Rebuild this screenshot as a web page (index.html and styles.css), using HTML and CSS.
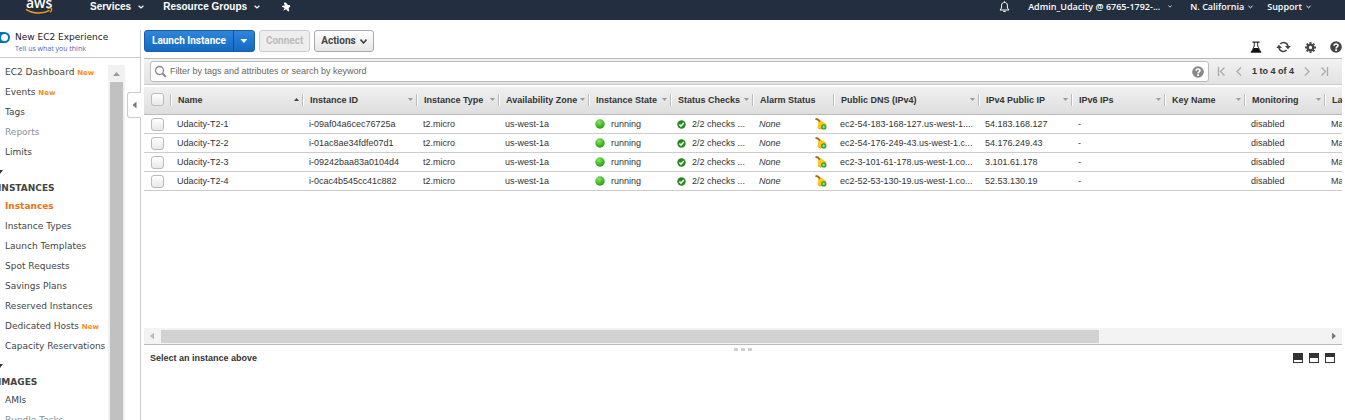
FILE: index.html
```html
<!DOCTYPE html>
<html lang="en">
<head>
<meta charset="utf-8">
<title>Instances | EC2 Management Console</title>
<link rel="stylesheet" href="styles.css">
</head>
<body>
<svg class="defs" aria-hidden="true">
  <defs>
    <radialGradient id="green" cx="0.4" cy="0.3" r="0.7"><stop offset="0" stop-color="#8be36a"/><stop offset="0.6" stop-color="#46bd2a"/><stop offset="1" stop-color="#2b9a17"/></radialGradient>
    <symbol id="dot" viewBox="0 0 10 10"><circle cx="5" cy="5" r="4.7" fill="url(#green)"/></symbol>
    <symbol id="ok" viewBox="0 0 9 9"><circle cx="4.5" cy="4.5" r="4.2" fill="#26891f"/><path d="M2.4 4.5l1.6 1.6 2.8-3" fill="none" stroke="#fff" stroke-width="1.5"/></symbol>
    <symbol id="alarm" viewBox="0 0 12 12"><path d="M3.200 3.400L5.600 2.200 11.600 6 5.600 11 2.600 9.600z" fill="#fbc91d"/><path d="M2.800 9.800L5.700 11.200 8 9.400" fill="none" stroke="#d9981c" stroke-width="0.900"/><path d="M0.500 0.800L3 1.600 5 3.600" fill="none" stroke="#a06a22" stroke-width="1.900"/><circle cx="8.800" cy="8.900" r="2.700" fill="#2f9e22"/><path d="M8.800 7.400v3M7.300 8.900h3" stroke="#b9eba9" stroke-width="0.900"/></symbol>
    <symbol id="help" viewBox="0 0 12 12"><circle cx="6" cy="6" r="5.8" fill="currentColor"/><path d="M4.1 4.7C4.1 2.4 8 2.4 8 4.6 8 6 6.1 5.9 6.1 7.4" fill="none" stroke="#fff" stroke-width="1.6"/><path d="M5.2 8.3h1.8v1.6H5.2z" fill="#fff"/></symbol>
    <symbol id="chev" viewBox="0 0 6 4"><path d="M0.6 0.7L3 3 5.4 0.7" fill="none" stroke="currentColor" stroke-width="1.2"/></symbol>
  </defs>
</svg>

<header class="topbar">
  <a class="logo" href="#" aria-label="AWS home">
    <svg width="28" height="20" viewBox="0 0 28 20"><text class="logo-text" x="1" y="8">aws</text><path d="M1 9.4C8 14 18 14 24.500 10.300" fill="none" stroke="#f79a1f" stroke-width="1.5"/><path d="M22.500 8.700c2-.9 4-.8 4.200-.2.200 1-.5 2.700-1.600 4" fill="none" stroke="#f79a1f" stroke-width="1.100"/></svg>
  </a>
  <button class="menu menu-services">Services <svg width="6" height="4"><use href="#chev"/></svg></button>
  <button class="menu menu-groups">Resource Groups <svg width="6" height="4"><use href="#chev"/></svg></button>
  <button class="menu" aria-label="Pin"><svg width="10" height="10" viewBox="0 0 10 10"><path d="M3.700.3L5.200 1 6.900 3l2 .3.5 1.200L7.700 6l.4 3-1 .4L5 7.300 2.300 8.800 3.600 6.100 1 4.700l.3-1 2.500-.2L2.900 1.200z" fill="#fff"/></svg></button>
  <div class="account">
    <button class="menu menu-bell" aria-label="Notifications"><svg width="11" height="12" viewBox="0 0 11 12"><path d="M1 9h9L8.400 7V4.200C8.400.5 2.600.5 2.600 4.200V7zM4.300 10.500h2.400M5.500.3v1.200" fill="none" stroke="#fff" stroke-width="1"/></svg></button>
    <button class="menu menu-user">Admin_Udacity @ 6765-1792-... <svg width="4" height="3"><use href="#chev"/></svg></button>
    <button class="menu menu-region">N. California <svg width="5" height="4"><use href="#chev"/></svg></button>
    <button class="menu">Support <svg width="5" height="4"><use href="#chev"/></svg></button>
  </div>
</header>

<div class="page">
  <aside class="sidebar">
    <div class="experience">
      <label class="switch"><input type="checkbox" checked><span class="track"></span><span>New EC2 Experience</span></label>
      <a href="#">Tell us what you think</a>
    </div>
    <div class="side-body">
      <nav class="side-nav">
        <ul>
          <li><a href="#">EC2 Dashboard</a> <b>New</b></li>
          <li><a href="#">Events</a> <b>New</b></li>
          <li><a href="#">Tags</a></li>
          <li class="dim"><a href="#">Reports</a></li>
          <li><a href="#">Limits</a></li>
        </ul>
        <div class="fold"></div>
        <h2>INSTANCES</h2>
        <ul>
          <li class="current"><a href="#">Instances</a></li>
          <li><a href="#">Instance Types</a></li>
          <li><a href="#">Launch Templates</a></li>
          <li><a href="#">Spot Requests</a></li>
          <li><a href="#">Savings Plans</a></li>
          <li><a href="#">Reserved Instances</a></li>
          <li><a href="#">Dedicated Hosts</a> <b>New</b></li>
          <li><a href="#">Capacity Reservations</a></li>
        </ul>
        <div class="fold"></div>
        <h2>IMAGES</h2>
        <ul>
          <li><a href="#">AMIs</a></li>
          <li class="dim"><a href="#">Bundle Tasks</a></li>
        </ul>
      </nav>
      <div class="vscroll"><span class="arrow-up"></span><span class="vthumb"></span></div>
    </div>
    <button class="collapse" aria-label="Collapse sidebar"><span></span></button>
  </aside>

  <main class="content">
    <div class="toolbar">
      <div class="split"><button class="launch">Launch Instance</button><button class="launch-more" aria-label="More launch options"><span></span></button></div>
      <button class="btn" disabled>Connect</button>
      <button class="btn">Actions <svg width="7" height="5" viewBox="0 0 7 5"><path d="M.5.5L3.500 4 6.500.5" fill="none" stroke="#444" stroke-width="1.600"/></svg></button>
      <div class="tools">
        <button aria-label="Experiments"><svg width="12" height="12" viewBox="0 0 12 12"><path d="M2.500.5h7v1.300H2.500zM3.800 1.500h1v3.800L1.500 10h9L7.200 5.300V1.500h1V5L11.500 11.500H.5L3.800 5z" fill="#222"/><path d="M3.500 7h5l2.500 4.500H1z" fill="#111"/></svg></button>
        <button aria-label="Refresh"><svg width="15" height="12" viewBox="0 0 15 12"><path d="M4.300 3C7 .3 11.500 1.500 12 5.500M10.700 9C8 11.700 3.500 10.500 3 6.500" fill="none" stroke="#444" stroke-width="1.700"/><path d="M9 5h5.800L12 8.300zM.2 7h5.800L3 3.700z" fill="#444"/></svg></button>
        <button aria-label="Settings"><svg width="11" height="11" viewBox="0 0 12 12"><circle cx="6" cy="6" r="3.100" fill="none" stroke="#444" stroke-width="2.600"/><path d="M6 0v2M6 10v2M0 6h2M10 6h2M1.800 1.800l1.400 1.400M8.800 8.800l1.400 1.400M1.800 10.200l1.400-1.400M8.800 3.200l1.400-1.400" stroke="#444" stroke-width="2.200"/></svg></button>
        <button aria-label="Help"><svg width="12" height="12"><use href="#help"/></svg></button>
      </div>
    </div>

    <div class="filter">
      <div class="search">
        <svg width="13" height="13" viewBox="0 0 13 13"><circle cx="5.500" cy="5.500" r="4" fill="none" stroke="#888" stroke-width="1.300"/><path d="M8.500 8.500l3.300 3.300" stroke="#888" stroke-width="2"/></svg>
        <input type="text" aria-label="Filter instances" placeholder="Filter by tags and attributes or search by keyword">
        <svg class="search-help" width="12" height="12"><use href="#help"/></svg>
      </div>
      <div class="pager">
        <button aria-label="First page"><svg width="9" height="9" viewBox="0 0 9 9"><path d="M1.500 0v9M7.500.5l-4 4 4 4"/></svg></button>
        <button aria-label="Previous page"><svg width="6" height="9" viewBox="0 0 6 9"><path d="M5 .5l-4 4 4 4"/></svg></button>
        <span>1 to 4 of 4</span>
        <button aria-label="Next page"><svg width="6" height="9" viewBox="0 0 6 9"><path d="M1 .5l4 4-4 4"/></svg></button>
        <button aria-label="Last page"><svg width="9" height="9" viewBox="0 0 9 9"><path d="M7.500 0v9M1.500.5l4 4-4 4"/></svg></button>
      </div>
    </div>

    <div class="grid">
      <table>
        <colgroup><col class="w-check"><col class="w-name"><col class="w-id"><col class="w-type"><col class="w-zone"><col class="w-state"><col class="w-checks"><col class="w-alarm"><col class="w-dns"><col class="w-ip"><col class="w-ip6"><col class="w-key"><col class="w-mon"><col></colgroup>
        <thead><tr>
          <th class="pick"><input type="checkbox" aria-label="Select all"></th>
          <th class="sorted"><div>Name</div></th><th class="sort"><div>Instance ID</div></th><th class="sort"><div>Instance Type</div></th><th class="sort"><div>Availability Zone</div></th><th class="sort"><div>Instance State</div></th><th class="sort"><div>Status Checks</div></th><th><div>Alarm Status</div></th><th class="sort"><div>Public DNS (IPv4)</div></th><th class="sort"><div>IPv4 Public IP</div></th><th class="sort"><div>IPv6 IPs</div></th><th class="sort"><div>Key Name</div></th><th class="sort"><div>Monitoring</div></th><th><div>La</div></th>
        </tr></thead>
        <tbody>
          <tr><td class="pick"><input type="checkbox" aria-label="Select Udacity-T2-1"></td><td>Udacity-T2-1</td><td>i-09af04a6cec76725a</td><td>t2.micro</td><td>us-west-1a</td><td><div class="state"><svg width="10" height="10"><use href="#dot"/></svg>running</div></td><td><div class="checks"><svg width="9" height="9"><use href="#ok"/></svg>2/2 checks ...</div></td><td><div class="alarm"><i>None</i><svg width="12" height="12"><use href="#alarm"/></svg></div></td><td>ec2-54-183-168-127.us-west-1....</td><td>54.183.168.127</td><td>-</td><td></td><td>disabled</td><td>Ma</td></tr>
          <tr><td class="pick"><input type="checkbox" aria-label="Select Udacity-T2-2"></td><td>Udacity-T2-2</td><td>i-01ac8ae34fdfe07d1</td><td>t2.micro</td><td>us-west-1a</td><td><div class="state"><svg width="10" height="10"><use href="#dot"/></svg>running</div></td><td><div class="checks"><svg width="9" height="9"><use href="#ok"/></svg>2/2 checks ...</div></td><td><div class="alarm"><i>None</i><svg width="12" height="12"><use href="#alarm"/></svg></div></td><td>ec2-54-176-249-43.us-west-1.c...</td><td>54.176.249.43</td><td>-</td><td></td><td>disabled</td><td>Ma</td></tr>
          <tr><td class="pick"><input type="checkbox" aria-label="Select Udacity-T2-3"></td><td>Udacity-T2-3</td><td>i-09242baa83a0104d4</td><td>t2.micro</td><td>us-west-1a</td><td><div class="state"><svg width="10" height="10"><use href="#dot"/></svg>running</div></td><td><div class="checks"><svg width="9" height="9"><use href="#ok"/></svg>2/2 checks ...</div></td><td><div class="alarm"><i>None</i><svg width="12" height="12"><use href="#alarm"/></svg></div></td><td>ec2-3-101-61-178.us-west-1.co...</td><td>3.101.61.178</td><td>-</td><td></td><td>disabled</td><td>Ma</td></tr>
          <tr><td class="pick"><input type="checkbox" aria-label="Select Udacity-T2-4"></td><td>Udacity-T2-4</td><td>i-0cac4b545cc41c882</td><td>t2.micro</td><td>us-west-1a</td><td><div class="state"><svg width="10" height="10"><use href="#dot"/></svg>running</div></td><td><div class="checks"><svg width="9" height="9"><use href="#ok"/></svg>2/2 checks ...</div></td><td><div class="alarm"><i>None</i><svg width="12" height="12"><use href="#alarm"/></svg></div></td><td>ec2-52-53-130-19.us-west-1.co...</td><td>52.53.130.19</td><td>-</td><td></td><td>disabled</td><td>Ma</td></tr>
        </tbody>
      </table>
    </div>

    <div class="hscroll"><span class="arrow-left"></span><div class="htrack"><span class="hthumb"></span></div><span class="arrow-right"></span></div>

    <section class="details">
      <div class="grip"><span></span><span></span><span></span></div>
      <div class="details-head">
        <h3>Select an instance above</h3>
        <div class="layouts"><button class="low" aria-label="Small panel"></button><button class="mid" aria-label="Medium panel"></button><button class="high" aria-label="Large panel"></button></div>
      </div>
    </section>
  </main>
</div>
</body>
</html>
```

FILE: styles.css
```css
* { box-sizing: border-box; }
body {
  margin: 0;
  height: 100vh;
  overflow: hidden;
  display: flex;
  flex-direction: column;
  font: 9px/12px "Liberation Sans", Arial, sans-serif;
  color: #333;
  background: #fff;
}
button { font: inherit; color: inherit; padding: 0; border: 0; background: none; }
a { color: inherit; text-decoration: none; }
ul { list-style: none; margin: 0; padding: 0; }
h2, h3 { margin: 0; font-size: inherit; }
svg { display: block; flex: none; }
.defs { position: absolute; width: 0; height: 0; }

/* Top bar */
.topbar {
  flex: none;
  display: flex;
  align-items: flex-start;
  height: 20px;
  padding-left: 25px;
  overflow: hidden;
  color: #fff;
  background: #232f3e;
}
.logo { margin-right: 37px; }
.logo-text { font: 600 14px "Open Sans", sans-serif; fill: #fff; }
.menu { display: flex; align-items: center; height: 13px; font-weight: bold; white-space: nowrap; }
.menu-services, .menu-groups { gap: 7px; font-size: 10px; }
.menu-services { margin-right: 19px; }
.menu-groups { margin-right: 21px; }
.account { display: flex; margin-left: auto; padding-right: 34px; font-family: "Open Sans", sans-serif; }
.account .menu { gap: 4px; font-weight: 600; }
.account .menu-bell { margin-right: 18px; }
.account .menu-user { gap: 8px; margin-right: 18px; }
.account .menu-region { margin-right: 14px; }

.page { flex: 1; display: flex; min-height: 0; }

/* Sidebar */
.sidebar {
  position: relative;
  flex: none;
  display: flex;
  flex-direction: column;
  width: 141px;
  margin-top: 10px;
  border-right: 1px solid #ccc;
  font-family: "DejaVu Sans", Verdana, sans-serif;
  color: #444;
}
.experience { height: 28px; padding-left: 15px; border-bottom: 1px solid #ccc; }
.experience a { display: block; font: 7px/10px "Open Sans", sans-serif; color: #5a5fc0; }
.switch { display: flex; align-items: center; height: 14px; color: #222; white-space: nowrap; }
.switch input { position: absolute; left: 0; width: 10px; height: 10px; margin: 0; opacity: 0; }
.track {
  position: absolute;
  left: 0;
  width: 10px;
  height: 11px;
  padding: 2px 2px 2px 1px;
  border-radius: 0 6px 6px 0;
  background: #0073bb;
}
.track::before { content: ""; display: block; width: 7px; height: 7px; border-radius: 50%; background: #fff; }
.side-body { flex: 1; display: flex; min-height: 0; padding-top: 4px; overflow: hidden; }
.side-nav { flex: 1; white-space: nowrap; }
.side-nav li { height: 20px; padding-left: 5px; line-height: 20px; }
.side-nav b { font: bold 7px/20px "DejaVu Sans", sans-serif; color: #ff8c1a; }
.side-nav .dim { color: #879196; }
.side-nav .current { font-weight: bold; color: #ec7211; }
.side-nav h2 { height: 16px; margin-left: -2px; line-height: 16px; }
.fold { height: 18px; padding-top: 8px; }
.fold::before { content: ""; display: block; width: 3px; height: 4px; background: #333; clip-path: polygon(0 0, 100% 0, 0 100%); }
.vscroll { flex: none; width: 17px; margin: 3px 15px 0 0; padding: 0 2px; background: #f1f1f1; }
.arrow-up { display: block; height: 17px; padding: 7px 0 0 3px; }
.arrow-up::before { content: ""; display: block; width: 7px; height: 4px; background: #999; clip-path: polygon(50% 0, 100% 100%, 0 100%); }
.vthumb { display: block; height: 100%; background: #c1c1c1; }
.collapse { position: absolute; right: -1px; top: 62px; width: 14px; height: 26px; border: 1px solid #ccc; border-right: 0; border-radius: 3px 0 0 3px; background: #fff; display: grid; place-items: center; }
.collapse span { width: 4px; height: 7px; background: #777; clip-path: polygon(0 50%, 100% 0, 100% 100%); }

/* Toolbar */
.content { flex: 1; min-width: 0; display: flex; flex-direction: column; padding: 10px 3px 0; }
.toolbar { display: flex; gap: 4px; height: 28px; }
.toolbar > *, .split button { height: 22px; font: bold 10px/12px Roboto, sans-serif; }
.split { display: flex; border: 1px solid #1a5dad; border-radius: 3px; color: #fff; background: linear-gradient(#2f85da, #146ac2); }
.split .launch { height: 20px; padding: 0 7px; }
.split .launch-more { display: grid; place-items: center; width: 21px; height: 20px; border-left: 1px solid #124f99; }
.launch-more span { width: 7px; height: 4px; background: #fff; clip-path: polygon(0 0, 100% 0, 50% 100%); }
.btn { display: flex; align-items: center; gap: 4px; padding: 0 6px; border: 1px solid #aaa; border-radius: 3px; color: #444; background: linear-gradient(#fff, #e6e6e6); }
.btn:disabled { border-color: #ccc; color: #bbb; background: #eee; }
.toolbar .tools { display: flex; align-items: center; gap: 14px; height: 28px; margin-left: auto; padding-top: 6px; color: #444; }

/* Filter row */
.filter { flex: none; display: flex; align-items: center; height: 27px; padding-left: 6px; border-top: 1px solid #bbb; border-bottom: 1px solid #ccc; background: linear-gradient(#f2f2f2, #e2e2e2); }
.search { flex: 1; display: flex; align-items: center; gap: 3px; height: 21px; padding: 0 4px 0 3px; border: 1px solid #bbb; border-radius: 3px; background: #fff; }
.search input { flex: 1; min-width: 0; padding: 0 0 1px; border: 0; outline: 0; background: none; font: inherit; }
.search input::placeholder { color: #666; opacity: 1; }
.search-help { color: #888; }
.pager { display: flex; align-items: center; gap: 10px; padding: 0 13px 1px 8px; font-weight: bold; }
.pager path { fill: none; stroke: #aaa; stroke-width: 1.3; }

/* Instance table */
.grid { flex: 1; min-height: 0; padding-top: 2px; overflow: hidden; }
table { width: 100%; table-layout: fixed; border-collapse: separate; border-spacing: 0; }
th, td { padding: 0 0 0 7px; overflow: hidden; white-space: nowrap; text-align: left; }
th { height: 28px; padding-bottom: 2px; border-bottom: 1px solid #bbb; background: linear-gradient(#f0f0f0, #dedede); }
th div { display: flex; align-items: center; height: 12px; margin-left: -7px; padding: 0 3px 0 7px; border-left: 1px solid #bbb; box-shadow: inset 1px 0 #fff; }
.sort div::after, .sorted div::after { content: ""; width: 5px; height: 3px; margin-left: auto; background: #999; clip-path: polygon(0 0, 100% 0, 50% 100%); }
.sorted div::after { background: #444; clip-path: polygon(50% 0, 100% 100%, 0 100%); }
td { height: 19px; border-bottom: 1px solid #ccc; }
.pick input { appearance: none; display: block; width: 13px; height: 13px; margin: 0; border: 1px solid #bbb; border-radius: 3px; background: linear-gradient(#fff, #e8e8e8); }
.w-check { width: 26px; }
.w-name { width: 132px; }
.w-id { width: 114px; }
.w-type, .w-state, .w-checks { width: 82px; }
.w-zone { width: 90px; }
.w-alarm { width: 81px; }
.w-key, .w-mon { width: 80px; }
.w-dns { width: 145px; }
.w-ip, .w-ip6 { width: 93px; }
.state, .checks, .alarm { display: flex; align-items: center; }
.state { gap: 6px; }
.checks { gap: 6px; }
.alarm { justify-content: space-between; padding-right: 6px; }

/* Horizontal scrollbar */
.hscroll { flex: none; display: flex; align-items: center; height: 17px; padding: 0 6px; border-bottom: 1px solid #bbb; background: #f3f3f3; }
.arrow-left, .arrow-right { width: 4px; height: 7px; background: #bbb; clip-path: polygon(0 50%, 100% 0, 100% 100%); }
.arrow-right { background: #777; clip-path: polygon(0 0, 100% 50%, 0 100%); }
.htrack { flex: 1; padding: 0 7px; }
.hthumb { display: block; width: 80.6%; height: 13px; background: #d2d2d2; }

/* Details pane */
.details { flex: none; height: 75px; padding: 3px 7px 0 6px; }
.grip { display: flex; justify-content: center; gap: 3px; height: 3px; }
.grip span { width: 4px; border-radius: 1px; background: #ccc; }
.details-head { display: flex; justify-content: space-between; line-height: 14px; }
.layouts { display: flex; gap: 6px; padding-top: 2px; }
.layouts button { width: 10px; height: 10px; border: 1px solid #333; background: #fff; }
.layouts .low { border-top-width: 7px; }
.layouts .mid { border-top-width: 5px; }
.layouts .high { border-top-width: 4px; }
```
